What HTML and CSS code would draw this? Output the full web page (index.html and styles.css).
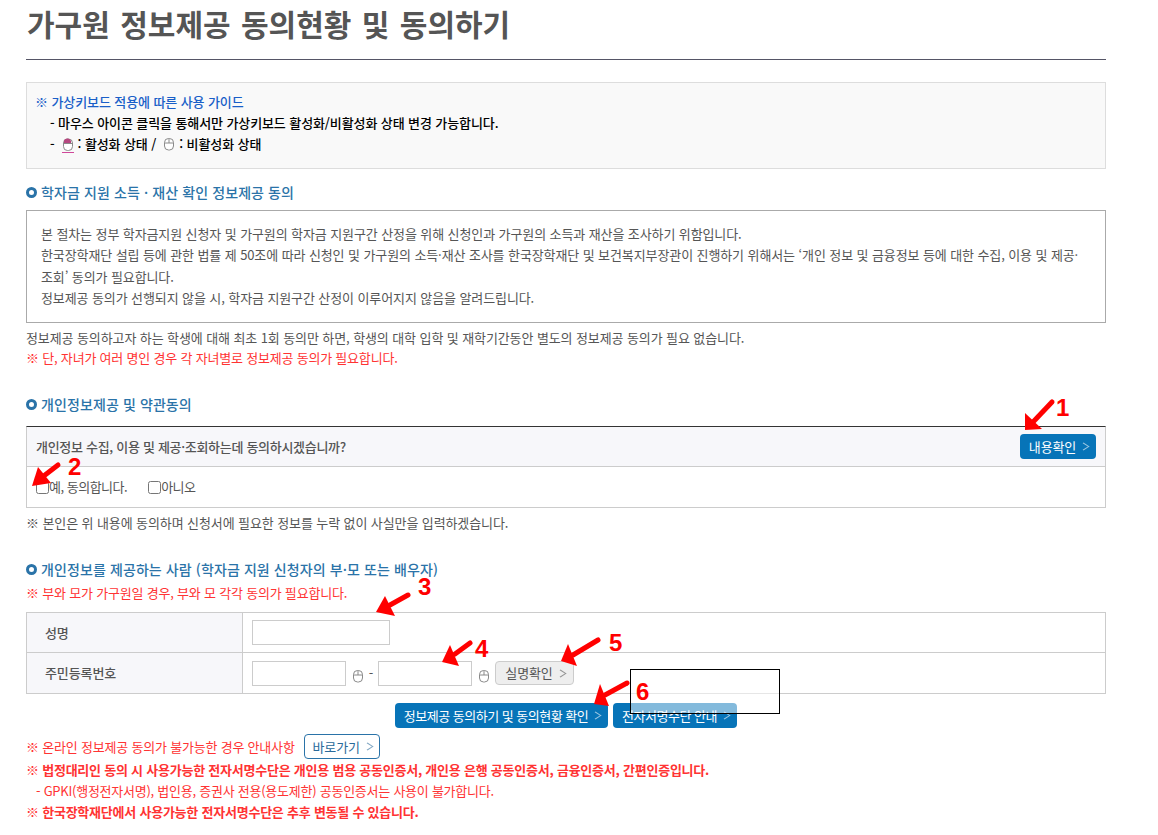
FILE: index.html
```html
<!DOCTYPE html>
<html lang="ko">
<head>
    <meta charset="UTF-8">
    <meta name="viewport" content="width=device-width, initial-scale=1.0">
    <title>가구원 정보제공 동의현황 및 동의하기</title>
    <link rel="stylesheet" href="styles.css">
</head>
<body>
    <svg class="icon-defs" width="0" height="0">
        <defs>
            <symbol id="mouse" viewBox="0 0 12 14">
                <rect x="1.5" y="1.5" width="9" height="11.5" rx="4" fill="#fff" stroke="#8a8a8a"/>
                <path d="M1.5 6h9M6 1.5V6" fill="none" stroke="#8a8a8a"/>
            </symbol>
            <symbol id="mouse-on" viewBox="0 0 12 14">
                <rect x="1.5" y="1.5" width="9" height="11.5" rx="4" fill="#fff" stroke="#8a8a8a"/>
                <path d="M2 6V4.5A3.5 3 0 0 1 9 3.5V6z" fill="#b5487f"/>
                <path d="M1.5 6h9" fill="none" stroke="#8a8a8a"/>
            </symbol>
        </defs>
    </svg>

    <div class="container">
        <h1 class="page-title">가구원 정보제공 동의현황 및 동의하기</h1>

        <div class="guide">
            <p class="guide-head">※ 가상키보드 적용에 따른 사용 가이드</p>
            <p class="guide-line">- 마우스 아이콘 클릭을 통해서만 가상키보드 활성화/비활성화 상태 변경 가능합니다.</p>
            <p class="guide-line">- <svg class="mouse mouse-active"><use href="#mouse-on"/></svg> : 활성화 상태 / <svg class="mouse"><use href="#mouse"/></svg> : 비활성화 상태</p>
        </div>

        <h2 class="sub-title first">학자금 지원 소득 · 재산 확인 정보제공 동의</h2>
        <div class="notice">
            본 절차는 정부 학자금지원 신청자 및 가구원의 학자금 지원구간 산정을 위해 신청인과 가구원의 소득과 재산을 조사하기 위함입니다.<br>
            한국장학재단 설립 등에 관한 법률 제 50조에 따라 신청인 및 가구원의 소득·재산 조사를 한국장학재단 및 보건복지부장관이 진행하기 위해서는 ‘개인 정보 및 금융정보 등에 대한 수집, 이용 및 제공·<br>
            조회’ 동의가 필요합니다.<br>
            정보제공 동의가 선행되지 않을 시, 학자금 지원구간 산정이 이루어지지 않음을 알려드립니다.
        </div>
        <p class="note">정보제공 동의하고자 하는 학생에 대해 최초 1회 동의만 하면, 학생의 대학 입학 및 재학기간동안 별도의 정보제공 동의가 필요 없습니다.</p>
        <p class="note red">※ 단, 자녀가 여러 명인 경우 각 자녀별로 정보제공 동의가 필요합니다.</p>

        <h2 class="sub-title second">개인정보제공 및 약관동의</h2>
        <div class="agree">
            <div class="agree-head">
                <strong>개인정보 수집, 이용 및 제공·조회하는데 동의하시겠습니까?</strong>
                <a class="btn btn-blue btn-check">내용확인<span class="chev"></span></a>
            </div>
            <div class="agree-body">
                <label class="check"><input type="checkbox">예, 동의합니다.</label>
                <label class="check"><input type="checkbox">아니오</label>
            </div>
        </div>
        <p class="note gray">※ 본인은 위 내용에 동의하며 신청서에 필요한 정보를 누락 없이 사실만을 입력하겠습니다.</p>

        <h2 class="sub-title third">개인정보를 제공하는 사람 (학자금 지원 신청자의 부·모 또는 배우자)</h2>
        <p class="note red tight">※ 부와 모가 가구원일 경우, 부와 모 각각 동의가 필요합니다.</p>

        <table class="form-table">
            <tr class="row-name">
                <th>성명</th>
                <td><input class="field field-name" type="text"></td>
            </tr>
            <tr class="row-id">
                <th>주민등록번호</th>
                <td>
                    <div class="id-row">
                        <input class="field field-id" type="text">
                        <svg class="mouse"><use href="#mouse"/></svg>
                        <span class="dash">-</span>
                        <input class="field field-id" type="text">
                        <svg class="mouse"><use href="#mouse"/></svg>
                        <a class="btn btn-gray">실명확인<span class="chev"></span></a>
                    </div>
                </td>
            </tr>
        </table>

        <div class="actions">
            <a class="btn btn-blue">정보제공 동의하기 및 동의현황 확인<span class="chev"></span></a>
            <a class="btn btn-blue">전자서명수단 안내<span class="chev"></span></a>
        </div>

        <div class="foot-notes">
            <p class="foot-row">※ 온라인 정보제공 동의가 불가능한 경우 안내사항 <a class="btn btn-line">바로가기<span class="chev"></span></a></p>
            <p class="foot-strong">※ 법정대리인 동의 시 사용가능한 전자서명수단은 개인용 범용 공동인증서, 개인용 은행 공동인증서, 금융인증서, 간편인증입니다.</p>
            <p class="foot-sub">- GPKI(행정전자서명), 법인용, 증권사 전용(용도제한) 공동인증서는 사용이 불가합니다.</p>
            <p class="foot-strong">※ 한국장학재단에서 사용가능한 전자서명수단은 추후 변동될 수 있습니다.</p>
        </div>
    </div>

    <!-- annotations drawn over the capture -->
    <div class="cover-box"></div>
    <svg class="marks" width="1158" height="835" viewBox="0 0 1158 835">
        <g class="mark-lines">
            <path d="M1052 402 1034 421"/>
            <path d="M58 465 45 475"/>
            <path d="M408 595 390 605"/>
            <path d="M470 643 455 654"/>
            <path d="M598 640 573 655"/>
            <path d="M627 683 605 695"/>
        </g>
        <g class="mark-heads">
            <path d="M1025 430 1025 413 1042 429z"/>
            <path d="M32 486 38 467 51 483z"/>
            <path d="M376 612 385 596 395 616z"/>
            <path d="M442 662 450 645 459 666z"/>
            <path d="M561 661 568 644 577 666z"/>
            <path d="M594 704 600 684 609 706z"/>
        </g>
    </svg>
    <span class="mark-no no-1">1</span>
    <span class="mark-no no-2">2</span>
    <span class="mark-no no-3">3</span>
    <span class="mark-no no-4">4</span>
    <span class="mark-no no-5">5</span>
    <span class="mark-no no-6">6</span>
</body>
</html>
```

FILE: styles.css
```css
*, *::before {
    box-sizing: border-box;
}
body {
    margin: 0;
    position: relative;
    height: 835px;
    overflow: hidden;
    background: #fff;
    color: #555;
    font-family: 'Noto Sans CJK KR', 'Noto Sans', sans-serif;
    font-size: 13px;
    line-height: 20px;
    letter-spacing: -0.1px;
}
p {
    margin: 0;
}
.icon-defs {
    position: absolute;
}
.container {
    width: 1080px;
    margin-left: 26px;
}
.page-title {
    height: 60px;
    margin: 0;
    padding-left: 1px;
    border-bottom: 1px solid #556;
    color: #555;
    font-size: 30px;
    font-weight: 700;
    line-height: 47px;
    letter-spacing: 0;
    word-spacing: 2px;
}
.guide {
    height: 87px;
    margin-top: 22px;
    padding: 8px 8px 0;
    border: 1px solid #ddd;
    background: #f9f9f9;
    color: #000;
    font-weight: 500;
}
.guide-head {
    height: 21px;
    color: #1a5fc8;
    line-height: 21px;
}
.guide-line {
    display: flex;
    align-items: center;
    gap: 4px;
    height: 21px;
    padding-left: 15px;
    line-height: 21px;
}
.mouse {
    flex: none;
    width: 12px;
    height: 14px;
}
.guide-line .mouse {
    margin-left: 3px;
}
.guide-line .mouse-active {
    height: 16px;
    margin-top: 2px;
    border-bottom: 1px solid #d0479a;
}
.sub-title {
    position: relative;
    margin: 0;
    padding-left: 15px;
    color: #2a73a8;
    font-size: 14px;
    font-weight: 500;
    line-height: 20px;
    letter-spacing: 0.1px;
}
.sub-title::before {
    content: '';
    position: absolute;
    left: 0;
    top: 5px;
    width: 11px;
    height: 11px;
    border: 3px solid #2a73a8;
    border-radius: 50%;
}
.sub-title.first {
    margin-top: 13px;
}
.sub-title.second {
    margin-top: 26px;
}
.sub-title.third {
    margin-top: 26px;
}
.notice {
    height: 113px;
    margin-top: 8px;
    padding: 12px 14px 0;
    border: 1px solid #aaa;
    line-height: 21.4px;
}
.note {
    height: 20px;
    margin-top: 0;
}
.notice + .note {
    margin-top: 5px;
}
.red {
    color: #f33;
    letter-spacing: -0.2px;
}
.tight {
    margin-top: 4px;
}
.agree {
    margin-top: 12px;
    border: 1px solid #ccc;
    border-top: 1px solid #333;
}
.agree-head {
    display: flex;
    align-items: center;
    justify-content: space-between;
    height: 40px;
    padding: 0 9px;
    background: #f7f7fa;
    border-bottom: 1px solid #ccc;
}
.agree-head strong {
    font-weight: 500;
    letter-spacing: -0.3px;
}
.agree-body {
    display: flex;
    gap: 21px;
    height: 40px;
    padding: 0 9px;
    align-items: center;
}
.check {
    display: flex;
    align-items: center;
    letter-spacing: -0.5px;
}
.check input {
    width: 13px;
    height: 13px;
    margin: 0;
}
.gray {
    margin-top: 5px;
}
.btn {
    display: inline-flex;
    align-items: center;
    justify-content: center;
    height: 25px;
    border-radius: 4px;
}
.btn-blue {
    background: #0774b8;
    color: #fff;
}
.btn-check {
    width: 76px;
}
.btn-gray {
    width: 79px;
    height: 24px;
    border: 1px solid #ccc;
    background: #eee;
    color: #555;
}
.btn-line {
    width: 76px;
    margin-left: 9px;
    border: 1px solid #2a73a8;
    background: #fff;
    color: #2a6a9a;
}
.chev {
    width: 7px;
    height: 7px;
    margin-left: 4px;
    border-top: 1.5px solid currentColor;
    border-right: 1.5px solid currentColor;
    transform: rotate(45deg) skew(-12deg, -12deg);
    opacity: 0.6;
}
.form-table {
    width: 100%;
    margin-top: 9px;
    border-collapse: collapse;
    border: 1px solid #ccc;
}
.form-table th,
.form-table td {
    padding: 0;
    border: 1px solid #ccc;
}
.row-name th,
.row-name td {
    height: 40px;
}
.row-id th,
.row-id td {
    height: 41px;
}
.form-table th {
    width: 216px;
    padding-left: 18px;
    background: #f7f7fa;
    font-weight: 500;
    text-align: left;
}
.form-table td {
    padding-left: 9px;
}
.field {
    display: block;
    height: 25px;
    margin: 0;
    border: 1px solid #ccc;
    background: #fff;
}
.field-name {
    width: 138px;
}
.field-id {
    width: 94px;
}
.id-row {
    display: flex;
    align-items: center;
}
.id-row .mouse {
    margin: 5px 0 0 6px;
}
.id-row .dash {
    width: 14px;
    text-align: center;
}
.id-row .btn {
    margin-left: 5px;
}
.actions {
    display: flex;
    justify-content: center;
    gap: 5px;
    margin-top: 9px;
    letter-spacing: -0.5px;
}
.actions .btn:first-child {
    width: 213px;
}
.actions .btn:last-child {
    width: 124px;
}
.foot-notes {
    margin-top: 6px;
    color: #f33;
}
.foot-row {
    display: flex;
    align-items: center;
    height: 25px;
    letter-spacing: -0.2px;
}
.foot-strong {
    height: 21px;
    font-weight: 700;
    line-height: 21px;
    letter-spacing: -0.23px;
}
.foot-sub {
    height: 20px;
    margin-top: 1px;
    padding-left: 10px;
    letter-spacing: -0.25px;
}
.cover-box {
    position: absolute;
    left: 630px;
    top: 669px;
    width: 150px;
    height: 45px;
    border: 1px solid #000;
    background: rgba(255, 255, 255, 0.5);
}
.marks {
    position: absolute;
    left: 0;
    top: 0;
    pointer-events: none;
}
.mark-lines path {
    fill: none;
    stroke: #f00;
    stroke-width: 5;
    stroke-linecap: round;
}
.mark-heads path {
    fill: #f00;
}
.mark-no {
    position: absolute;
    color: #f00;
    font-family: 'Liberation Sans', sans-serif;
    font-size: 24px;
    font-weight: 700;
    line-height: 16px;
    letter-spacing: 0;
}
.no-1 { left: 1056px; top: 400px; }
.no-2 { left: 68px; top: 459px; }
.no-3 { left: 418px; top: 579px; }
.no-4 { left: 475px; top: 641px; }
.no-5 { left: 609px; top: 635px; }
.no-6 { left: 636px; top: 684px; }
```
